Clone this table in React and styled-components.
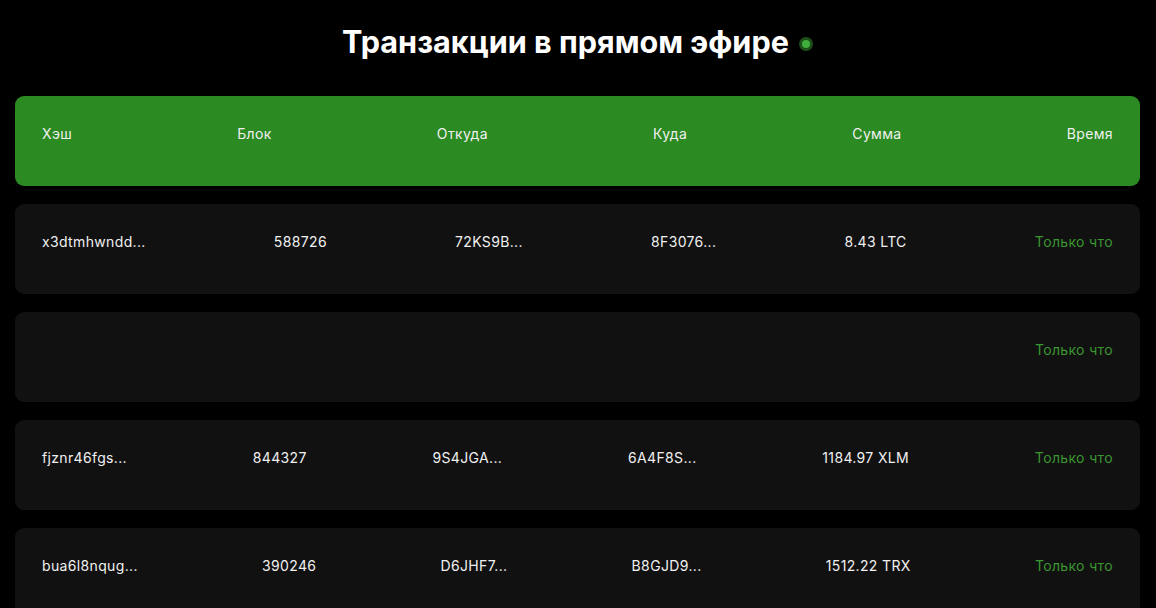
import React from 'react';
import styled, { createGlobalStyle } from 'styled-components';

const GlobalStyle = createGlobalStyle`
  html, body {
    margin: 0;
    padding: 0;
    background: #000;
    overflow: hidden;
  }
  body {
    font-family: Inter, "Noto Sans", sans-serif;
    color: #f2f2f2;
  }
`;

const columns = ['Хэш', 'Блок', 'Откуда', 'Куда', 'Сумма', 'Время'];

const transactions = [
  { hash: 'x3dtmhwndd...', block: '588726', from: '72KS9B...', to: '8F3076...', amount: '8.43 LTC', time: 'Только что' },
  { hash: '', block: '', from: '', to: '', amount: '', time: 'Только что' },
  { hash: 'fjznr46fgs...', block: '844327', from: '9S4JGA...', to: '6A4F8S...', amount: '1184.97 XLM', time: 'Только что' },
  { hash: 'bua6l8nqug...', block: '390246', from: 'D6JHF7...', to: 'B8GJD9...', amount: '1512.22 TRX', time: 'Только что' },
];

const App = () => {
  return (
    <>
      <GlobalStyle />
      <Page>
        <TitleRow>
          <Title>Транзакции в прямом эфире</Title>
          <LiveDot />
        </TitleRow>
        <Table>
          <Row header>
            {columns.map((col) => (
              <Cell key={col}>{col}</Cell>
            ))}
          </Row>
          {transactions.map((tx, i) => (
            <Row key={i}>
              <Cell>{tx.hash}</Cell>
              <Cell>{tx.block}</Cell>
              <Cell>{tx.from}</Cell>
              <Cell>{tx.to}</Cell>
              <Cell>{tx.amount}</Cell>
              <TimeCell>{tx.time}</TimeCell>
            </Row>
          ))}
        </Table>
      </Page>
    </>
  );
};

const Page = styled.div`
  padding: 24px 16px 0 15px;
`;

const TitleRow = styled.div`
  display: flex;
  align-items: center;
  justify-content: center;
  gap: 10px;
  height: 36px;
  margin-bottom: 36px;
`;

const Title = styled.h1`
  margin: 0;
  font-size: 30.6px;
  line-height: 36px;
  font-weight: 700;
  color: #fff;
`;

const LiveDot = styled.span`
  width: 8px;
  height: 8px;
  border-radius: 50%;
  background: #3fae3a;
  border: 3px solid #1c4f1a;
  margin-top: 4px;
`;

const Table = styled.div`
  display: flex;
  flex-direction: column;
  gap: 18px;
`;

const Row = styled.div`
  display: flex;
  justify-content: space-between;
  align-items: flex-start;
  height: 90px;
  box-sizing: border-box;
  padding: 29px 27px 0;
  border-radius: 9px;
  background: ${(props) => (props.header ? '#2b8a22' : '#111111')};
`;

const Cell = styled.div`
  font-size: 14px;
  line-height: 17px;
  letter-spacing: 0.35px;
  color: #f0f0f0;
  white-space: nowrap;
`;

const TimeCell = styled(Cell)`
  color: #3a9630;
`;

export default App;
